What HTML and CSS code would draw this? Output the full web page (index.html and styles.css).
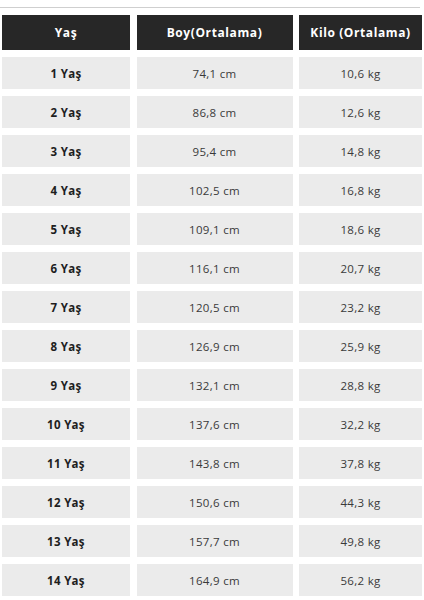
FILE: index.html
```html
<!DOCTYPE html>
<html lang="tr">
<head>
<meta charset="utf-8">
<link rel="stylesheet" href="styles.css">
</head>
<body>
<div class="page">
  <div class="rule"></div>
  <div class="table">
    <div class="th">Yaş</div><div class="th">Boy(Ortalama)</div><div class="th">Kilo (Ortalama)</div>
    <div class="td age">1 Yaş</div><div class="td">74,1 cm</div><div class="td">10,6 kg</div>
    <div class="td age">2 Yaş</div><div class="td">86,8 cm</div><div class="td">12,6 kg</div>
    <div class="td age">3 Yaş</div><div class="td">95,4 cm</div><div class="td">14,8 kg</div>
    <div class="td age">4 Yaş</div><div class="td">102,5 cm</div><div class="td">16,8 kg</div>
    <div class="td age">5 Yaş</div><div class="td">109,1 cm</div><div class="td">18,6 kg</div>
    <div class="td age">6 Yaş</div><div class="td">116,1 cm</div><div class="td">20,7 kg</div>
    <div class="td age">7 Yaş</div><div class="td">120,5 cm</div><div class="td">23,2 kg</div>
    <div class="td age">8 Yaş</div><div class="td">126,9 cm</div><div class="td">25,9 kg</div>
    <div class="td age">9 Yaş</div><div class="td">132,1 cm</div><div class="td">28,8 kg</div>
    <div class="td age">10 Yaş</div><div class="td">137,6 cm</div><div class="td">32,2 kg</div>
    <div class="td age">11 Yaş</div><div class="td">143,8 cm</div><div class="td">37,8 kg</div>
    <div class="td age">12 Yaş</div><div class="td">150,6 cm</div><div class="td">44,3 kg</div>
    <div class="td age">13 Yaş</div><div class="td">157,7 cm</div><div class="td">49,8 kg</div>
    <div class="td age">14 Yaş</div><div class="td">164,9 cm</div><div class="td">56,2 kg</div>
  </div>
</div>
</body>
</html>
```
FILE: styles.css
```css
html, body {
  margin: 0;
  padding: 0;
  background: #ffffff;
}
body {
  font-family: "Open Sans", "DejaVu Sans", sans-serif;
  color: #222;
}
.page {
  width: 424px;
  height: 600px;
  overflow: hidden;
  padding-top: 7px;
  box-sizing: border-box;
}
.rule {
  height: 1px;
  background: #cfcfcf;
  margin: 0 4px 7px 0;
}
.table {
  display: grid;
  grid-template-columns: 128px 156px 123px;
  grid-template-rows: 35px;
  grid-auto-rows: 32px;
  column-gap: 6.5px;
  row-gap: 7px;
  padding-left: 2px;
}
.th {
  background: #272727;
  color: #fff;
  font-weight: 700;
  font-size: 12px;
  display: flex;
  align-items: center;
  justify-content: center;
  letter-spacing: 0.6px;
}
.td {
  background: #ebebeb;
  color: #3a3a3a;
  font-size: 11.5px;
  display: flex;
  align-items: center;
  justify-content: center;
  letter-spacing: 0.3px;
}
.td.age {
  font-weight: 700;
  color: #1e1e1e;
}
```
